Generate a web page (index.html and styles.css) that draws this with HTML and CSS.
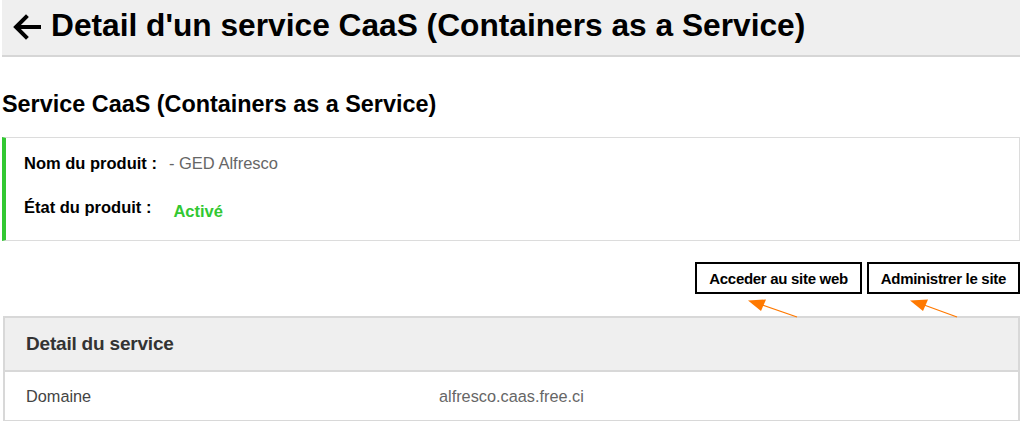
FILE: index.html
```html
<!DOCTYPE html>
<html lang="fr">
<head>
<meta charset="utf-8">
<title>Detail d'un service CaaS</title>
<link rel="stylesheet" href="styles.css">
</head>
<body>
<div class="page">
  <header class="topbar">
    <svg class="back" width="28" height="26" viewBox="0 0 28 26" aria-hidden="true">
      <path d="M26 13H4M13 3L3 13l10 10" fill="none" stroke="#000" stroke-width="4" stroke-linecap="square" stroke-linejoin="miter"/>
    </svg>
    <h1 class="title">Detail d'un service CaaS (Containers as a Service)</h1>
  </header>

  <h2 class="subtitle">Service CaaS (Containers as a Service)</h2>

  <section class="card">
    <div class="card-row">
      <span class="label">Nom du produit :</span>
      <span class="value">- GED Alfresco</span>
    </div>
    <div class="card-row">
      <span class="label">État du produit :</span>
      <span class="status">Activé</span>
    </div>
  </section>

  <div class="actions">
    <a class="btn" href="#">Acceder au site web</a>
    <a class="btn" href="#">Administrer le site</a>
  </div>

  <section class="panel">
    <div class="panel-head">Detail du service</div>
    <div class="panel-row">
      <span class="key">Domaine</span>
      <span class="val">alfresco.caas.free.ci</span>
    </div>
  </section>
</div>

<svg class="annot" width="1024" height="421" viewBox="0 0 1024 421" aria-hidden="true">
  <line x1="797" y1="317" x2="758" y2="303.5" stroke="#ff7900" stroke-width="1.3"/>
  <polygon points="748,300.5 766,299.5 761,311" fill="#ff7900"/>
  <line x1="957" y1="317" x2="920" y2="303.5" stroke="#ff7900" stroke-width="1.3"/>
  <polygon points="910,300.5 928,299.5 923,311" fill="#ff7900"/>
</svg>
</body>
</html>
```

FILE: styles.css
```css
*, *::before, *::after {
  box-sizing: border-box;
}

html, body {
  margin: 0;
  padding: 0;
  background: #fff;
  font-family: "Liberation Sans", Arial, sans-serif;
  color: #000;
  overflow: hidden;
}

.page {
  width: 1018px;
  margin-left: 2px;
  display: flex;
  flex-direction: column;
}

.topbar {
  height: 57px;
  background: #efefef;
  border-bottom: 2px solid #d6d6d6;
  display: flex;
  align-items: center;
  padding-left: 11px;
  gap: 10px;
}

.back {
  flex: none;
  margin-top: -2px;
}

.title {
  margin: 0;
  font-size: 31.7px;
  font-weight: 700;
  line-height: 1;
  margin-top: -4px;
}

.subtitle {
  margin: 34px 0 0 0;
  font-size: 23.4px;
  font-weight: 700;
  line-height: 27px;
}

.card {
  margin-top: 19px;
  height: 104px;
  border: 1px solid #dcdcdc;
  border-left: 4px solid #32c832;
  padding: 15px 0 0 18px;
  display: flex;
  flex-direction: column;
  gap: 24px;
}

.card-row {
  display: flex;
  align-items: baseline;
  font-size: 16.5px;
  line-height: 20px;
}

.label {
  font-weight: 700;
}

.value {
  color: #666;
  margin-left: 12px;
}

.status {
  color: #32c832;
  font-weight: 700;
  margin-left: 22px;
  position: relative;
  top: 4px;
}

.actions {
  margin-top: 21px;
  display: flex;
  justify-content: flex-end;
  gap: 5px;
}

.btn {
  height: 32px;
  border: 2px solid #000;
  padding: 0 12px;
  display: flex;
  align-items: center;
  font-size: 15px;
  font-weight: 700;
  letter-spacing: -0.3px;
  color: #000;
  text-decoration: none;
}

.panel {
  margin-top: 22px;
  margin-left: 1px;
  border: 2px solid #d8d8d8;
  border-bottom-width: 1px;
}

.panel-head {
  height: 54px;
  background: #efefef;
  border-bottom: 2px solid #d8d8d8;
  display: flex;
  align-items: center;
  padding-left: 21px;
  font-size: 19px;
  font-weight: 700;
  color: #333;
  letter-spacing: -0.2px;
}

.panel-row {
  height: 48px;
  display: flex;
  align-items: center;
  padding-left: 21px;
  font-size: 16.3px;
}

.key {
  width: 413px;
  color: #444;
}

.val {
  color: #666;
}

.annot {
  position: absolute;
  left: 0;
  top: 0;
  pointer-events: none;
}
```
